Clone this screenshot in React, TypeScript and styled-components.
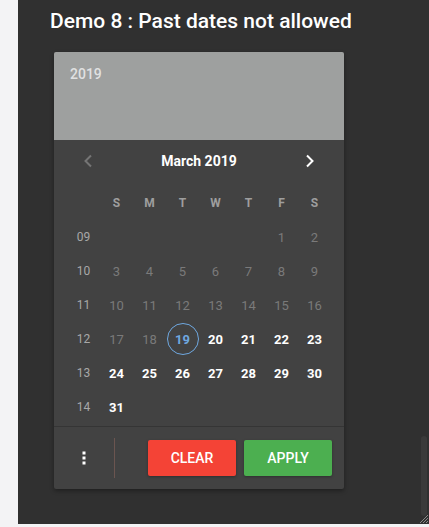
import React from "react";
import styled, { createGlobalStyle } from "styled-components";

const GlobalStyle = createGlobalStyle`
  html, body {
    margin: 0;
    padding: 0;
    background: #f3f3f5;
    font-family: Roboto, "Liberation Sans", sans-serif;
  }
`;

const Shell = styled.div`
  width: 429px;
  height: 527px;
  display: flex;
  overflow: hidden;
`;

const Panel = styled.div`
  position: relative;
  margin-left: 18px;
  flex: 1;
  height: 524px;
  background: #303030;
  padding: 9px 0 0 32px;
  box-sizing: border-box;
`;

const Title = styled.h2`
  margin: 0 0 19px 0;
  color: #ffffff;
  font-size: 21px;
  font-weight: 500;
  line-height: 24px;
  white-space: nowrap;
`;

const Card = styled.div`
  width: 290px;
  margin-left: 4px;
  border-radius: 2px;
  overflow: hidden;
  background: #424242;
  box-shadow: 0 2px 4px rgba(0, 0, 0, 0.35);
`;

const Header = styled.div`
  height: 88px;
  background: #9ea09f;
  padding: 14px 16px;
  box-sizing: border-box;
`;

const Year = styled.div`
  color: rgba(255, 255, 255, 0.7);
  font-size: 14px;
  font-weight: 500;
`;

const Body = styled.div`
  padding: 0 13px 2px 13px;
`;

const Nav = styled.div`
  height: 42px;
  margin-bottom: 4px;
  display: flex;
  align-items: center;
  justify-content: space-between;
  padding: 0 16px 0 16px;
`;

const Arrow = styled.span<{ $off?: boolean }>`
  display: flex;
  color: ${(p) => (p.$off ? "#757575" : "#ffffff")};
`;

const Month = styled.div`
  color: #ffffff;
  font-size: 14px;
  font-weight: 700;
`;

const Grid = styled.div`
  display: grid;
  grid-template-columns: repeat(8, 33px);
  grid-auto-rows: 34px;
`;

const Cell = styled.div<{ $kind: "head" | "week" | "past" | "day" | "today" | "empty" }>`
  display: flex;
  align-items: center;
  justify-content: center;
  font-size: ${(p) => (p.$kind === "week" || p.$kind === "head" ? "12px" : "13px")};
  font-weight: ${(p) =>
    p.$kind === "day" || p.$kind === "today" || p.$kind === "head" ? 700 : 400};
  color: ${(p) =>
    ({
      head: "#9e9e9e",
      week: "#a8a8a8",
      past: "#7a7a7a",
      day: "#ffffff",
      today: "#6fa8e0",
      empty: "transparent",
    })[p.$kind]};
`;

const Ring = styled.span`
  width: 30px;
  height: 30px;
  border: 1px solid #6fa8e0;
  border-radius: 50%;
  display: flex;
  align-items: center;
  justify-content: center;
  flex-shrink: 0;
`;

const Footer = styled.div`
  border-top: 1px solid #353535;
  height: 62px;
  display: flex;
  align-items: center;
  padding-right: 12px;
`;

const MoreBox = styled.div`
  width: 61px;
  height: 40px;
  display: flex;
  align-items: center;
  justify-content: center;
  border-right: 1px solid #6b5550;
  box-sizing: border-box;
  margin-right: 33px;
`;

const Button = styled.button<{ $color: string }>`
  width: 88px;
  height: 36px;
  border: none;
  border-radius: 2px;
  background: ${(p) => p.$color};
  color: #ffffff;
  font-family: Roboto, "Liberation Sans", sans-serif;
  font-size: 14px;
  font-weight: 500;
  text-transform: uppercase;
  box-shadow: 0 1px 3px rgba(0, 0, 0, 0.3);
  & + & {
    margin-left: 8px;
  }
`;

const Scroll = styled.div`
  position: absolute;
  right: 2px;
  top: 436px;
  width: 6px;
  height: 80px;
  border-radius: 3px;
  background: #3a3a3a;
`;

const Grip = styled.svg`
  position: absolute;
  right: 0;
  bottom: 0;
`;

const weekdays = ["S", "M", "T", "W", "T", "F", "S"];

type Kind = "past" | "day" | "today" | "empty";

const buildWeeks = () => {
  const weeks: { num: string; days: { label: string; kind: Kind }[] }[] = [];
  let day = 1;
  const startOffset = 5;
  for (let w = 0; w < 6; w++) {
    const days: { label: string; kind: Kind }[] = [];
    for (let c = 0; c < 7; c++) {
      const idx = w * 7 + c;
      if (idx < startOffset || day > 31) {
        days.push({ label: "", kind: "empty" });
        continue;
      }
      const kind: Kind = day < 19 ? "past" : day === 19 ? "today" : "day";
      days.push({ label: String(day), kind });
      day++;
    }
    weeks.push({ num: String(9 + w).padStart(2, "0"), days });
  }
  return weeks;
};

const App: React.FC = () => {
  const weeks = buildWeeks();
  return (
    <Shell>
      <GlobalStyle />
      <Panel>
        <Title>Demo 8 : Past dates not allowed</Title>
        <Card>
          <Header>
            <Year>2019</Year>
          </Header>
          <Body>
            <Nav>
              <Arrow $off>
                <svg width="10" height="14" viewBox="0 0 10 14">
                  <path d="M8 1.5 L2.5 7 L8 12.5" fill="none" stroke="currentColor" strokeWidth="2" />
                </svg>
              </Arrow>
              <Month>March 2019</Month>
              <Arrow>
                <svg width="10" height="14" viewBox="0 0 10 14">
                  <path d="M2 1.5 L7.5 7 L2 12.5" fill="none" stroke="currentColor" strokeWidth="2" />
                </svg>
              </Arrow>
            </Nav>
            <Grid>
              <Cell $kind="empty" />
              {weekdays.map((d, i) => (
                <Cell key={i} $kind="head">
                  {d}
                </Cell>
              ))}
              {weeks.map((w) => (
                <React.Fragment key={w.num}>
                  <Cell $kind="week">{w.num}</Cell>
                  {w.days.map((d, i) => (
                    <Cell key={i} $kind={d.kind}>
                      {d.kind === "today" ? <Ring>{d.label}</Ring> : d.label}
                    </Cell>
                  ))}
                </React.Fragment>
              ))}
            </Grid>
          </Body>
          <Footer>
            <MoreBox>
              <svg width="4" height="14" viewBox="0 0 4 14">
                <rect x="0.5" y="0.5" width="3" height="3" fill="#fff" />
                <rect x="0.5" y="5.5" width="3" height="3" fill="#fff" />
                <rect x="0.5" y="10.5" width="3" height="3" fill="#fff" />
              </svg>
            </MoreBox>
            <Button $color="#f44336">Clear</Button>
            <Button $color="#4caf50">Apply</Button>
          </Footer>
        </Card>
        <Scroll />
        <Grip width="12" height="12" viewBox="0 0 12 12">
          <path d="M11 3 L3 11 M11 6 L6 11 M11 9 L9 11" stroke="#8a8a8a" strokeWidth="1" />
        </Grip>
      </Panel>
    </Shell>
  );
};

export default App;
